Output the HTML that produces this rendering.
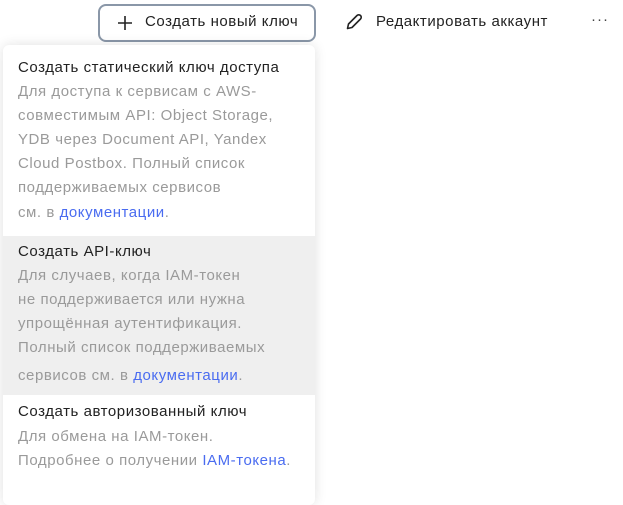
<!DOCTYPE html>
<html><head><meta charset="utf-8"><style>
*{margin:0;padding:0;box-sizing:border-box}
body{width:623px;height:485px;background:#fff;position:relative;overflow:hidden;font-family:"Liberation Sans",sans-serif;font-size:15px;letter-spacing:0.55px;color:#222}
.btn{position:absolute;left:98px;top:4px;width:218px;height:38px;border:2px solid #8a97a8;border-radius:8px}
.t{position:absolute;white-space:nowrap;line-height:20px}
.menu{position:absolute;left:3px;top:45px;width:312px;height:460px;background:#fff;border-radius:6px;box-shadow:0 0 12px rgba(0,0,0,.12)}
.hl{position:absolute;left:3px;top:236px;width:312px;height:159px;background:#efefef}
.d{color:#9a9a9a}
a{color:#4a6cf0;text-decoration:none}
</style></head><body>
<div class="btn"></div>
<svg style="position:absolute;left:117px;top:15px" width="16" height="16"><path d="M8 1V15M1 8H15" stroke="#222" stroke-width="1.6"/></svg>
<div class="t" style="left:145px;top:12px">Создать новый ключ</div>
<svg style="position:absolute;left:345px;top:13px" width="18" height="18"><path d="M2.5 15.5L3.5 11L12 2.5A2 2 0 0 1 15.5 6L7 14.5Z" fill="none" stroke="#222" stroke-width="1.6" stroke-linejoin="round"/></svg>
<div class="t" style="left:376px;top:12px">Редактировать аккаунт</div>
<div class="t" style="left:591px;top:10px;color:#444;letter-spacing:1px">···</div>
<div class="menu"></div>
<div class="hl"></div>
<div class="t" style="left:18px;top:58px">Создать статический ключ доступа</div>
<div class="t d" style="left:18px;top:82px">Для доступа к сервисам с AWS-</div>
<div class="t d" style="left:18px;top:106px">совместимым API: Object Storage,</div>
<div class="t d" style="left:18px;top:130px">YDB через Document API, Yandex</div>
<div class="t d" style="left:18px;top:154px">Cloud Postbox. Полный список</div>
<div class="t d" style="left:18px;top:178px">поддерживаемых сервисов</div>
<div class="t d" style="left:18px;top:203px">см. в <a>документации</a>.</div>
<div class="t" style="left:18px;top:242px">Создать API-ключ</div>
<div class="t d" style="left:18px;top:266px">Для случаев, когда IAM-токен</div>
<div class="t d" style="left:18px;top:290px">не поддерживается или нужна</div>
<div class="t d" style="left:18px;top:314px">упрощённая аутентификация.</div>
<div class="t d" style="left:18px;top:338px">Полный список поддерживаемых</div>
<div class="t d" style="left:18px;top:366px">сервисов см. в <a>документации</a>.</div>
<div class="t" style="left:18px;top:402px">Создать авторизованный ключ</div>
<div class="t d" style="left:18px;top:427px">Для обмена на IAM-токен.</div>
<div class="t d" style="left:18px;top:451px">Подробнее о получении <a>IAM-токена</a>.</div>
</body></html>
